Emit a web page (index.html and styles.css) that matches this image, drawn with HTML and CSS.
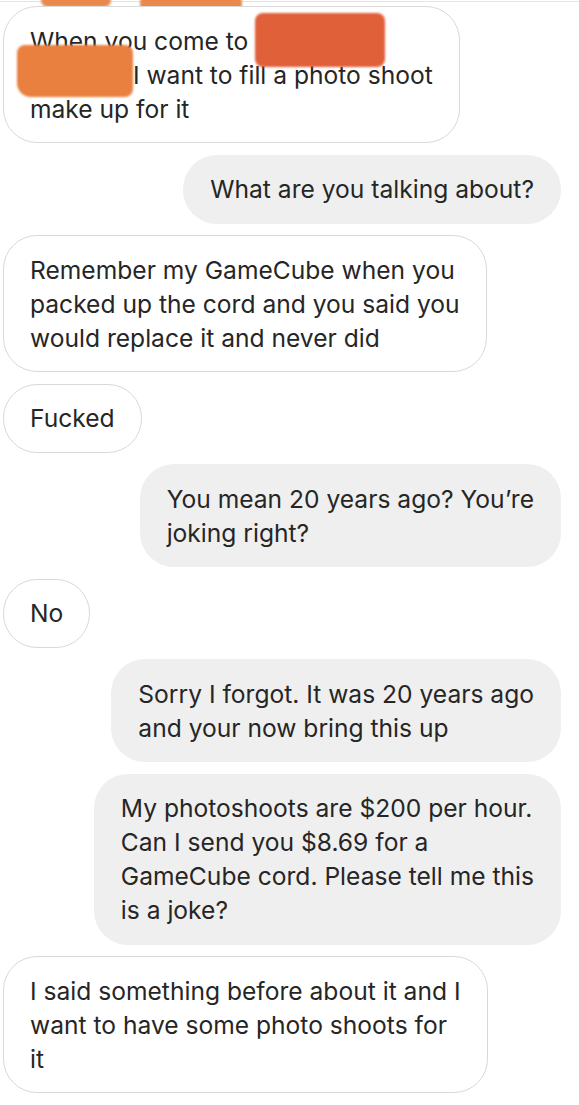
FILE: index.html
```html
<!DOCTYPE HTML>
<html>

<head>
    <meta charset="utf-8">
    <title>Messages</title>
    <link rel="stylesheet" href="styles.css">
</head>

<body>
    <div class="top-edge">
        <span class="blot blot-top1"></span>
        <span class="blot blot-top2"></span>
    </div>
    <div class="thread">
        <div class="msg them">
            When you come to <span class="hidden-word w1"><em>S</em><em>d</em></span><br>
            <span class="hidden-word w2"><em>i</em></span> I want to fill a photo shoot<br>
            make up for it
            <span class="blot blot-a"></span>
            <span class="blot blot-b"></span>
        </div>
        <div class="msg me">What are you talking about?</div>
        <div class="msg them">
            Remember my GameCube when you<br>
            packed up the cord and you said you<br>
            would replace it and never did
        </div>
        <div class="msg them">Fucked</div>
        <div class="msg me">
            You mean 20 years ago? You’re<br>
            joking right?
        </div>
        <div class="msg them">No</div>
        <div class="msg me">
            Sorry I forgot. It was 20 years ago<br>
            and your now bring this up
        </div>
        <div class="msg me">
            My photoshoots are $200 per hour.<br>
            Can I send you $8.69 for a<br>
            GameCube cord. Please tell me this<br>
            is a joke?
        </div>
        <div class="msg them">
            I said something before about it and I<br>
            want to have some photo shoots for<br>
            it
        </div>
        <div class="msg them next"></div>
    </div>
</body>

</html>
```

FILE: styles.css
```css
* {
    margin: 0;
    padding: 0;
    box-sizing: border-box;
}

html,
body {
    width: 579px;
    height: 1105px;
    overflow: hidden;
    background: #fff;
}

body {
    font-family: Inter, "Liberation Sans", sans-serif;
    font-size: 24.6px;
    color: #262626;
    position: relative;
}

.top-edge {
    height: 2px;
    border-bottom: 1px solid #e4e4e4;
}

.thread {
    display: flex;
    flex-direction: column;
    gap: 11.5px;
    padding: 4px 18px 0 3px;
}

.msg {
    position: relative;
    white-space: nowrap;
    line-height: 34px;
    border-radius: 34px;
}

.them {
    align-self: flex-start;
    padding: 16.5px 26px;
    border: 1px solid #d9d9d9;
    background: #fff;
}

.me {
    align-self: flex-end;
    padding: 17.5px 27px;
    background: #efefef;
}

.next {
    width: 428px;
    height: 60px;
}

.hidden-word {
    display: inline-flex;
    color: #d4d4d4;
    vertical-align: bottom;
}

.hidden-word em {
    font-style: normal;
}

.w1 {
    width: 124px;
    justify-content: space-between;
}

.w2 {
    width: 96px;
    justify-content: flex-end;
}

.blot {
    position: absolute;
    display: block;
    border-radius: 8px;
    filter: blur(1px);
}

.blot-top1 {
    left: 41px;
    top: -6px;
    width: 70px;
    height: 13px;
    background: #e98a4c;
}

.blot-top2 {
    left: 140px;
    top: -6px;
    width: 102px;
    height: 19px;
    background: #e98a4c;
}

.blot-a {
    left: 251px;
    top: 6px;
    width: 130px;
    height: 54px;
    background: #e0603a;
}

.blot-b {
    left: 13px;
    top: 38px;
    width: 116px;
    height: 52px;
    border-radius: 8px 8px 8px 14px;
    background: #e9803f;
}
```
